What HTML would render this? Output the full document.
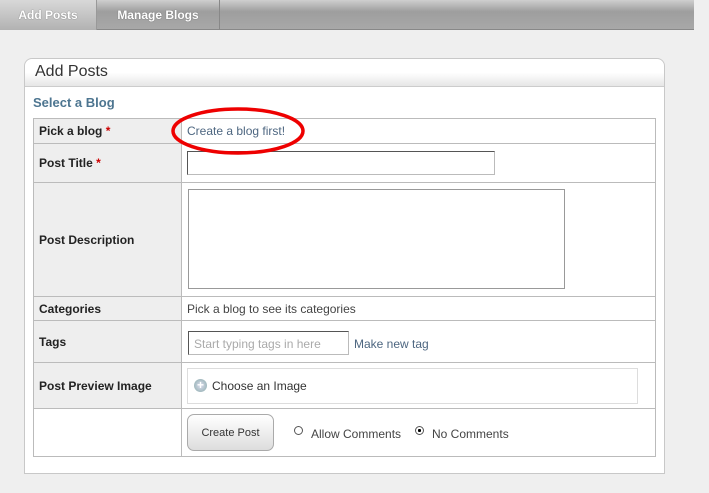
<!DOCTYPE html>
<html><head><style>
*{margin:0;padding:0;box-sizing:border-box}
body{width:709px;height:493px;background:#efefef;font-family:"Liberation Sans",Arial,sans-serif;position:relative;overflow:hidden}
.nav{position:absolute;left:0;top:0;width:694px;height:30px;background:linear-gradient(#cfcfcf,#9e9e9e 40%,#a8a8a8);border-bottom:1px solid #888}
.tab{position:absolute;top:0;height:30px;color:#fff;font-weight:bold;font-size:12px;line-height:31px;text-align:center;text-shadow:0 0 1px #555}
.panel{position:absolute;left:24px;top:58px;width:641px;height:416px;background:#fff;border:1px solid #c8c8c8;border-radius:8px 8px 0 0}
.ph{height:28px;border-bottom:1px solid #ccc;background:linear-gradient(#fff,#fff 50%,#e6e6e6);border-radius:8px 8px 0 0;font-size:16px;color:#333;padding:4px 0 0 10px}
.sel{position:absolute;left:33px;top:95px;font-size:13px;font-weight:bold;color:#4d7590}
.row{position:absolute;left:33px;width:623px;border:1px solid #bbb;border-bottom:none}
.lab{position:absolute;left:0;top:0;bottom:0;width:148px;background:#eee;border-right:1px solid #bbb;font-size:12px;font-weight:bold;color:#222;padding-left:5px;display:flex;align-items:center}
.val{position:absolute;left:153px;font-size:12px;color:#444}
.req{color:#c00}
</style></head><body>
<div class="nav">
<div class="tab" style="left:0;width:97px;background:linear-gradient(#d8d8d8,#b2b2b2);border-right:1px solid #999">Add Posts</div>
<div class="tab" style="left:97px;width:123px;border-right:1px solid #888">Manage Blogs</div>
</div>
<div class="panel"><div class="ph">Add Posts</div></div>
<div class="sel">Select a Blog</div>

<div class="row" style="top:118px;height:25px"><div class="lab">Pick a blog&nbsp;<span class="req">*</span></div><div class="val" style="top:5px;color:#4d6680">Create a blog first!</div></div>
<div class="row" style="top:143px;height:39px"><div class="lab">Post Title&nbsp;<span class="req">*</span></div><div style="position:absolute;left:153px;top:7px;width:308px;height:24px;border:1px solid #bbb;border-top-color:#555;border-left-color:#555"></div></div>
<div class="row" style="top:182px;height:114px"><div class="lab">Post Description</div><div style="position:absolute;left:154px;top:6px;width:377px;height:100px;border:1px solid #999"></div></div>
<div class="row" style="top:296px;height:24px"><div class="lab">Categories</div><div class="val" style="top:5px">Pick a blog to see its categories</div></div>
<div class="row" style="top:320px;height:42px"><div class="lab">Tags</div>
<div style="position:absolute;left:154px;top:10px;width:161px;height:24px;border:1px solid #bbb;border-top-color:#555;border-left-color:#555;font-size:12px;color:#aaa;padding:5px 0 0 5px">Start typing tags in here</div>
<div class="val" style="left:320px;top:16px;color:#4d6680">Make new tag</div></div>
<div class="row" style="top:362px;height:46px"><div class="lab">Post Preview Image</div>
<div style="position:absolute;left:153px;top:5px;width:451px;height:36px;border:1px solid #ddd"></div>
<div style="position:absolute;left:160px;top:16px;width:13px;height:13px;border-radius:50%;background:radial-gradient(#dde,#8aa);color:#fff;font-size:12px;line-height:12px;text-align:center;font-weight:bold">+</div>
<div class="val" style="left:178px;top:16px;color:#333">Choose an Image</div></div>
<div class="row" style="top:408px;height:49px;border-bottom:1px solid #bbb"><div class="lab" style="background:#fff"></div>
<div style="position:absolute;left:153px;top:5px;width:87px;height:37px;border:1px solid #aaa;border-radius:7px;background:linear-gradient(#fff,#eee 50%,#ddd);font-size:11px;color:#333;text-align:center;padding-top:12px">Create Post</div>
<div style="position:absolute;left:260px;top:17px;width:9px;height:9px;border:1px solid #555;border-radius:50%;background:#fff"></div>
<div class="val" style="left:277px;top:18px">Allow Comments</div>
<div style="position:absolute;left:381px;top:17px;width:9px;height:9px;border:1px solid #555;border-radius:50%;background:radial-gradient(#000 30%,#fff 35%)"></div>
<div class="val" style="left:398px;top:18px">No Comments</div>
</div>
<svg style="position:absolute;left:170px;top:104px" width="140" height="54"><ellipse cx="68" cy="27" rx="65" ry="22" fill="none" stroke="#e00" stroke-width="3.5"/></svg>
</body></html>
